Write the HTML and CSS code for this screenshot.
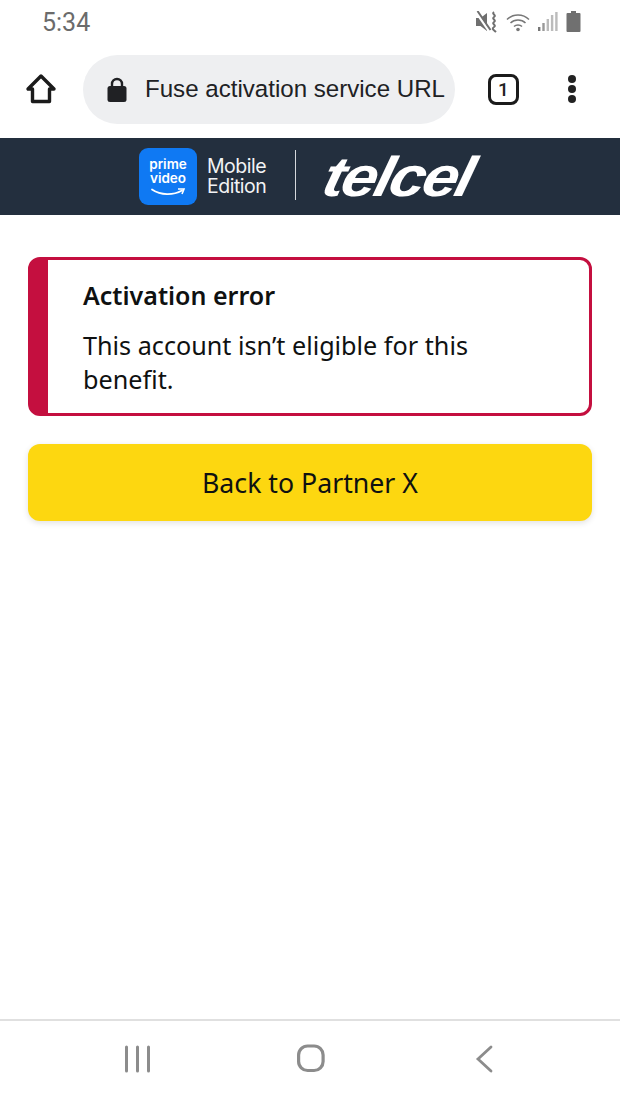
FILE: index.html
```html
<!DOCTYPE html>
<html lang="en">

<head>
    <meta charset="UTF-8">
    <meta name="viewport" content="width=device-width, initial-scale=1.0">
    <title>Fuse activation service</title>
    <link rel="stylesheet" href="styles.css">
</head>

<body>
    <div class="phone">

        <!-- android status bar -->
        <div class="status-bar">
            <span class="clock">5:34</span>
            <div class="status-icons">
                <svg width="22" height="22" viewBox="0 0 22 22">
                    <path d="M0 7h4.500L11 2v18l-6.500-5H0z" fill="#6f6f6f" />
                    <path d="M0 1l13 19" stroke="#fff" stroke-width="2.400" />
                    <path d="M1.500 0l13 19" stroke="#6f6f6f" stroke-width="2" />
                    <path d="M18 1c-3 2 3 3 0 5s3 3 0 5 3 3 0 5 0 3 2 5" fill="none" stroke="#6f6f6f" stroke-width="2" />
                </svg>
                <svg width="24" height="20" viewBox="0 0 24 20">
                    <path d="M1 7.500c6-6 16-6 22 0M4.500 11c4-4 11-4 15 0M8 14.500c2-2 6-2 8 0" fill="none" stroke="#777" stroke-width="1.500" />
                    <circle cx="12" cy="17.500" r="1.800" fill="#777" />
                </svg>
                <svg width="20" height="20" viewBox="0 0 20 20">
                    <rect x="0" y="15" width="2.400" height="4" fill="#777" />
                    <rect x="4.300" y="11" width="2.400" height="8" fill="#999" />
                    <rect x="8.600" y="7" width="2.400" height="12" fill="#bbb" />
                    <rect x="12.900" y="3" width="2.400" height="16" fill="#bbb" />
                    <rect x="17.200" y="0" width="2.400" height="19" fill="#bbb" />
                </svg>
                <svg width="15" height="21" viewBox="0 0 15 21">
                    <path d="M5 0h5v2h3.500a1 1 0 0 1 1 1v17a1 1 0 0 1-1 1H1.500a1 1 0 0 1-1-1V3a1 1 0 0 1 1-1H5z" fill="#707070" />
                </svg>
            </div>
        </div>

        <!-- browser toolbar -->
        <div class="toolbar">
            <svg class="home-icon" width="32" height="32" viewBox="0 0 32 32">
                <path d="M16 3L3 16H7.500V28.500H24.500V16H29z" fill="none" stroke="#1b1b1b" stroke-width="3.400" stroke-linejoin="round" />
            </svg>
            <div class="url-bar">
                <svg width="20" height="25" viewBox="0 0 20 25">
                    <path d="M5 10V7a5 5 0 0 1 10 0v3" fill="none" stroke="#202124" stroke-width="2.400" />
                    <rect x="0.500" y="9" width="19" height="16" rx="2.500" fill="#202124" />
                </svg>
                <span class="url-text">Fuse activation service URL</span>
            </div>
            <div class="tab-count">1</div>
            <div class="menu-dots"><i></i><i></i><i></i></div>
        </div>

        <!-- partner header -->
        <div class="brand-bar">
            <div class="prime-logo">
                <span class="prime-text">prime<br>video</span>
                <svg width="36" height="9" viewBox="0 0 36 9">
                    <path d="M2 1.500c9 6 21 6 30 1" fill="none" stroke="#fff" stroke-width="1.800" stroke-linecap="round" />
                    <path d="M28 1l6 0-2 5" fill="none" stroke="#fff" stroke-width="1.600" />
                </svg>
            </div>
            <div class="edition">Mobile<br>Edition</div>
            <div class="brand-divider"></div>
            <div class="telcel">telcel</div>
        </div>

        <div class="content">
            <div class="alert">
                <h4>Activation error</h4>
                <p>This account isn’t eligible for this benefit.</p>
            </div>
            <button class="back-btn">Back to Partner X</button>
        </div>

        <!-- android nav bar -->
        <div class="nav-bar">
            <svg width="28" height="28" viewBox="0 0 28 28">
                <path d="M2.500 2v24M13.500 2v24M24.500 2v24" stroke="#8c8c8c" stroke-width="3" stroke-linecap="round" />
            </svg>
            <svg width="30" height="30" viewBox="0 0 30 30">
                <rect x="1.600" y="2" width="24.500" height="24.500" rx="9" fill="none" stroke="#8c8c8c" stroke-width="3.200" />
            </svg>
            <svg width="24" height="28" viewBox="-4 0 24 28">
                <path d="M16 2L3 14l13 12" fill="none" stroke="#8c8c8c" stroke-width="2.800" stroke-linecap="round" />
            </svg>
        </div>
    </div>
</body>

</html>
```

FILE: styles.css
```css
* {
    box-sizing: border-box;
}

body {
    font-family: 'Liberation Sans', Arial, sans-serif;
    background: #fff;
    margin: 0;
    padding: 0;
}

.phone {
    width: 620px;
    height: 1102px;
    display: flex;
    flex-direction: column;
    overflow: hidden;
}

.status-bar {
    height: 45px;
    padding: 0 39px 1px 42px;
    display: flex;
    justify-content: space-between;
    align-items: center;
}

.clock {
    font-family: 'Roboto', sans-serif;
    font-size: 25px;
    color: #6b6b6b;
}

.status-icons {
    display: flex;
    align-items: center;
    gap: 8px;
    margin-bottom: 1px;
}

.toolbar {
    height: 93px;
    padding: 0 0 5px 25px;
    display: flex;
    align-items: center;
}

.url-bar {
    width: 372px;
    height: 69px;
    margin-left: 26px;
    padding-left: 24px;
    background: #eeeff1;
    border-radius: 35px;
    display: flex;
    align-items: center;
    gap: 18px;
    overflow: hidden;
}

.url-text {
    font-size: 24.100px;
    color: #202124;
    white-space: nowrap;
}

.tab-count {
    width: 31px;
    height: 31px;
    margin-left: 33px;
    border: 3.500px solid #1b1b1b;
    border-radius: 8px;
    font-family: 'Roboto', sans-serif;
    font-size: 19px;
    font-weight: 500;
    color: #222;
    display: flex;
    align-items: center;
    justify-content: center;
}

.menu-dots {
    margin-left: 49px;
    display: flex;
    flex-direction: column;
    gap: 2.400px;
}

.menu-dots i {
    width: 8px;
    height: 8px;
    background: #222;
    border-radius: 50%;
}

.brand-bar {
    height: 77px;
    background: #232f3e;
    padding-left: 139px;
    display: flex;
    align-items: center;
}

.prime-logo {
    width: 58px;
    height: 57px;
    background: #0f79f3;
    border-radius: 9px;
    display: flex;
    flex-direction: column;
    align-items: center;
    justify-content: center;
    color: #fff;
}

.prime-text {
    font-family: 'Inter', sans-serif;
    font-size: 13.500px;
    font-weight: 600;
    line-height: 14px;
    text-align: center;
    margin-bottom: 3px;
}

.edition {
    margin: 0 0 2px 10px;
    font-family: 'Inter', sans-serif;
    font-size: 19.500px;
    line-height: 20px;
    color: #f2f3f4;
    letter-spacing: -0.5px;
}

.brand-divider {
    width: 1px;
    height: 50px;
    margin: 0 0 3px 29px;
    background: #d5d8dc;
}

.telcel {
    margin-left: 21px;
    font-family: 'Liberation Sans', sans-serif;
    font-size: 56px;
    font-weight: 700;
    font-style: italic;
    line-height: 60px;
    letter-spacing: -2.500px;
    color: #fff;
    transform: scaleX(1.15) skewX(-12deg);
    transform-origin: left bottom;
}

.content {
    flex: 1;
    padding: 42px 28px 0;
    font-family: 'Noto Sans', sans-serif;
    color: #0f1111;
}

.alert {
    height: 159px;
    padding: 18px 40px 0 35px;
    border: 3px solid #c40f3f;
    border-left-width: 20px;
    border-radius: 12px;
    background: #fff;
}

.alert h4 {
    margin: 0 0 16px;
    font-size: 25px;
    font-weight: 600;
    line-height: 34px;
}

.alert p {
    margin: 0;
    font-size: 25.200px;
    line-height: 34px;
}

.back-btn {
    display: block;
    width: 100%;
    height: 77px;
    margin-top: 28px;
    padding: 0 0 1px;
    background: #fdd710;
    border: none;
    border-radius: 12px;
    box-shadow: 0 2px 6px rgba(0, 0, 0, 0.12);
    font-family: 'Noto Sans', sans-serif;
    font-size: 26.700px;
    color: #0f1111;
}

.nav-bar {
    height: 83px;
    border-top: 2px solid #e0e0e0;
    padding: 0 125px 6px 124px;
    display: flex;
    justify-content: space-between;
    align-items: center;
}
```
